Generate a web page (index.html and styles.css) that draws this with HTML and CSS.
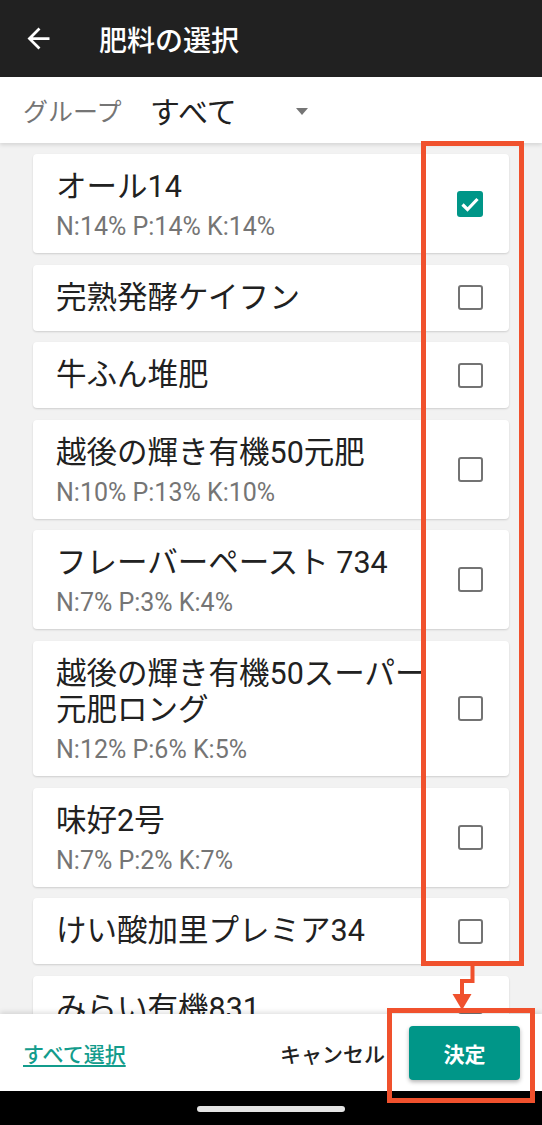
FILE: index.html
```html
<!DOCTYPE html>
<html lang="ja">

<head>
    <meta charset="UTF-8">
    <meta name="viewport" content="width=device-width, initial-scale=1.0">
    <title>肥料の選択</title>
    <link rel="stylesheet" href="styles.css">
</head>

<body>
    <div class="screen">
        <header class="toolbar">
            <svg class="back" viewBox="0 0 24 24"><path d="M20 11H7.83l5.59-5.59L12 4l-8 8 8 8 1.41-1.41L7.83 13H20v-2z" fill="#fff"/></svg>
            <h1 class="title">肥料の選択</h1>
        </header>

        <div class="group-row">
            <span class="group-label">グループ</span>
            <div class="spinner">
                <span class="spinner-value">すべて</span>
                <span class="caret"></span>
            </div>
        </div>

        <main class="list">
            <div class="card">
                <div class="card-text">
                    <div class="name">オール14</div>
                    <div class="npk">N:14% P:14% K:14%</div>
                </div>
                <div class="check">
                    <svg class="box checked" viewBox="0 0 26 26"><rect width="26" height="26" rx="3" fill="#009688"/><polyline points="5.5,13.5 10.5,18.5 20.5,8" fill="none" stroke="#fff" stroke-width="3.2"/></svg>
                </div>
            </div>
            <div class="card">
                <div class="card-text">
                    <div class="name">完熟発酵ケイフン</div>
                </div>
                <div class="check"><span class="box empty"></span></div>
            </div>
            <div class="card">
                <div class="card-text">
                    <div class="name">牛ふん堆肥</div>
                </div>
                <div class="check"><span class="box empty"></span></div>
            </div>
            <div class="card">
                <div class="card-text">
                    <div class="name">越後の輝き有機50元肥</div>
                    <div class="npk">N:10% P:13% K:10%</div>
                </div>
                <div class="check"><span class="box empty"></span></div>
            </div>
            <div class="card">
                <div class="card-text">
                    <div class="name">フレーバーペースト 734</div>
                    <div class="npk">N:7% P:3% K:4%</div>
                </div>
                <div class="check"><span class="box empty"></span></div>
            </div>
            <div class="card">
                <div class="card-text">
                    <div class="name">越後の輝き有機50スーパー元肥ロング</div>
                    <div class="npk">N:12% P:6% K:5%</div>
                </div>
                <div class="check"><span class="box empty"></span></div>
            </div>
            <div class="card">
                <div class="card-text">
                    <div class="name">味好2号</div>
                    <div class="npk">N:7% P:2% K:7%</div>
                </div>
                <div class="check"><span class="box empty"></span></div>
            </div>
            <div class="card">
                <div class="card-text">
                    <div class="name">けい酸加里プレミア34</div>
                </div>
                <div class="check"><span class="box empty"></span></div>
            </div>
            <div class="card">
                <div class="card-text">
                    <div class="name">みらい有機831</div>
                    <div class="npk">N:8% P:3% K:1%</div>
                </div>
                <div class="check"><span class="box empty"></span></div>
            </div>
        </main>

        <footer class="actions">
            <a class="select-all" href="#">すべて選択</a>
            <button class="btn-cancel">キャンセル</button>
            <button class="btn-ok">決定</button>
        </footer>

        <div class="navbar"><span class="pill"></span></div>

        <!-- annotation marks drawn over the screen -->
        <svg class="marks" viewBox="0 0 542 1125">
            <rect x="423.5" y="143.5" width="98" height="820" fill="none" stroke="#f0512d" stroke-width="5"/>
            <polyline points="472.5,965 472.5,981 462,981 462,996" fill="none" stroke="#f0512d" stroke-width="4"/>
            <polygon points="452.5,994 471.5,994 462,1010" fill="#f0512d"/>
            <rect x="389.5" y="1010.5" width="143" height="90" fill="none" stroke="#f0512d" stroke-width="5"/>
        </svg>
    </div>
</body>

</html>
```

FILE: styles.css
```css
body {
    margin: 0;
    font-family: Roboto, "Noto Sans CJK JP", sans-serif;
    background: #000;
}

.screen {
    position: relative;
    width: 542px;
    height: 1125px;
    display: flex;
    flex-direction: column;
    overflow: hidden;
    background: #f2f2f2;
}

/* top app bar */
.toolbar {
    height: 77px;
    flex-shrink: 0;
    display: flex;
    align-items: center;
    padding-left: 22px;
    background: #212121;
}

.back {
    width: 33px;
    height: 33px;
}

.title {
    margin: 0 0 0 44px;
    font-size: 28px;
    font-weight: 500;
    color: #fff;
}

/* group selector */
.group-row {
    position: relative;
    z-index: 1;
    height: 66px;
    flex-shrink: 0;
    display: flex;
    align-items: center;
    padding-left: 23px;
    background: #fff;
    box-shadow: 0 2px 4px rgba(0, 0, 0, 0.12);
}

.group-label {
    width: 127px;
    font-size: 25px;
    color: #757575;
}

.spinner {
    display: flex;
    align-items: center;
}

.spinner-value {
    font-size: 30px;
    color: #212121;
}

.caret {
    margin-left: 59px;
    margin-top: 2px;
    border-left: 6.5px solid transparent;
    border-right: 6.5px solid transparent;
    border-top: 7px solid #757575;
}

/* fertilizer list */
.list {
    flex: 1;
    min-height: 0;
    display: flex;
    flex-direction: column;
    gap: 11.6px;
    padding: 11px 33px 0;
    overflow: hidden;
}

.card {
    flex-shrink: 0;
    display: flex;
    align-items: center;
    padding: 15px 9px 15px 23px;
    background: #fff;
    border-radius: 4px;
    box-shadow: 0 1px 2px rgba(0, 0, 0, 0.15);
}

.card-text {
    flex: 1;
    min-width: 0;
}

.name {
    font-size: 30.5px;
    line-height: 36px;
    color: #212121;
}

.npk {
    margin-top: 11px;
    font-size: 25px;
    line-height: 22px;
    color: #757575;
}

.check {
    width: 60px;
    display: flex;
    justify-content: center;
}

.box {
    display: block;
    width: 26px;
    height: 26px;
    box-sizing: border-box;
}

.box.empty {
    width: 25px;
    height: 25px;
    border: 2.6px solid #737373;
    border-radius: 3px;
}

/* bottom actions */
.actions {
    position: relative;
    z-index: 1;
    height: 77px;
    flex-shrink: 0;
    display: flex;
    align-items: center;
    padding: 0 22px 0 23px;
    background: #fff;
    box-shadow: 0 -2px 5px rgba(0, 0, 0, 0.12);
}

.select-all {
    margin-right: auto;
    font-size: 21px;
    font-weight: 500;
    color: #139c8c;
    text-decoration: underline;
    text-underline-offset: 3px;
}

.btn-cancel {
    margin-right: 13px;
    padding: 0 11px;
    border: none;
    background: none;
    font-family: inherit;
    font-size: 21px;
    font-weight: 500;
    color: #212121;
}

.btn-ok {
    width: 111px;
    height: 54px;
    border: none;
    border-radius: 4px;
    background: #009688;
    font-family: inherit;
    font-size: 21px;
    font-weight: 700;
    color: #fff;
    box-shadow: 0 2px 4px rgba(0, 0, 0, 0.3);
}

/* system navigation */
.navbar {
    height: 34px;
    flex-shrink: 0;
    display: flex;
    justify-content: center;
    align-items: center;
    background: #000;
}

.pill {
    width: 148px;
    height: 6px;
    margin-top: 1px;
    border-radius: 3px;
    background: #e4e4e4;
}

.marks {
    position: absolute;
    z-index: 2;
    top: 0;
    left: 0;
    width: 542px;
    height: 1125px;
    pointer-events: none;
}
```
